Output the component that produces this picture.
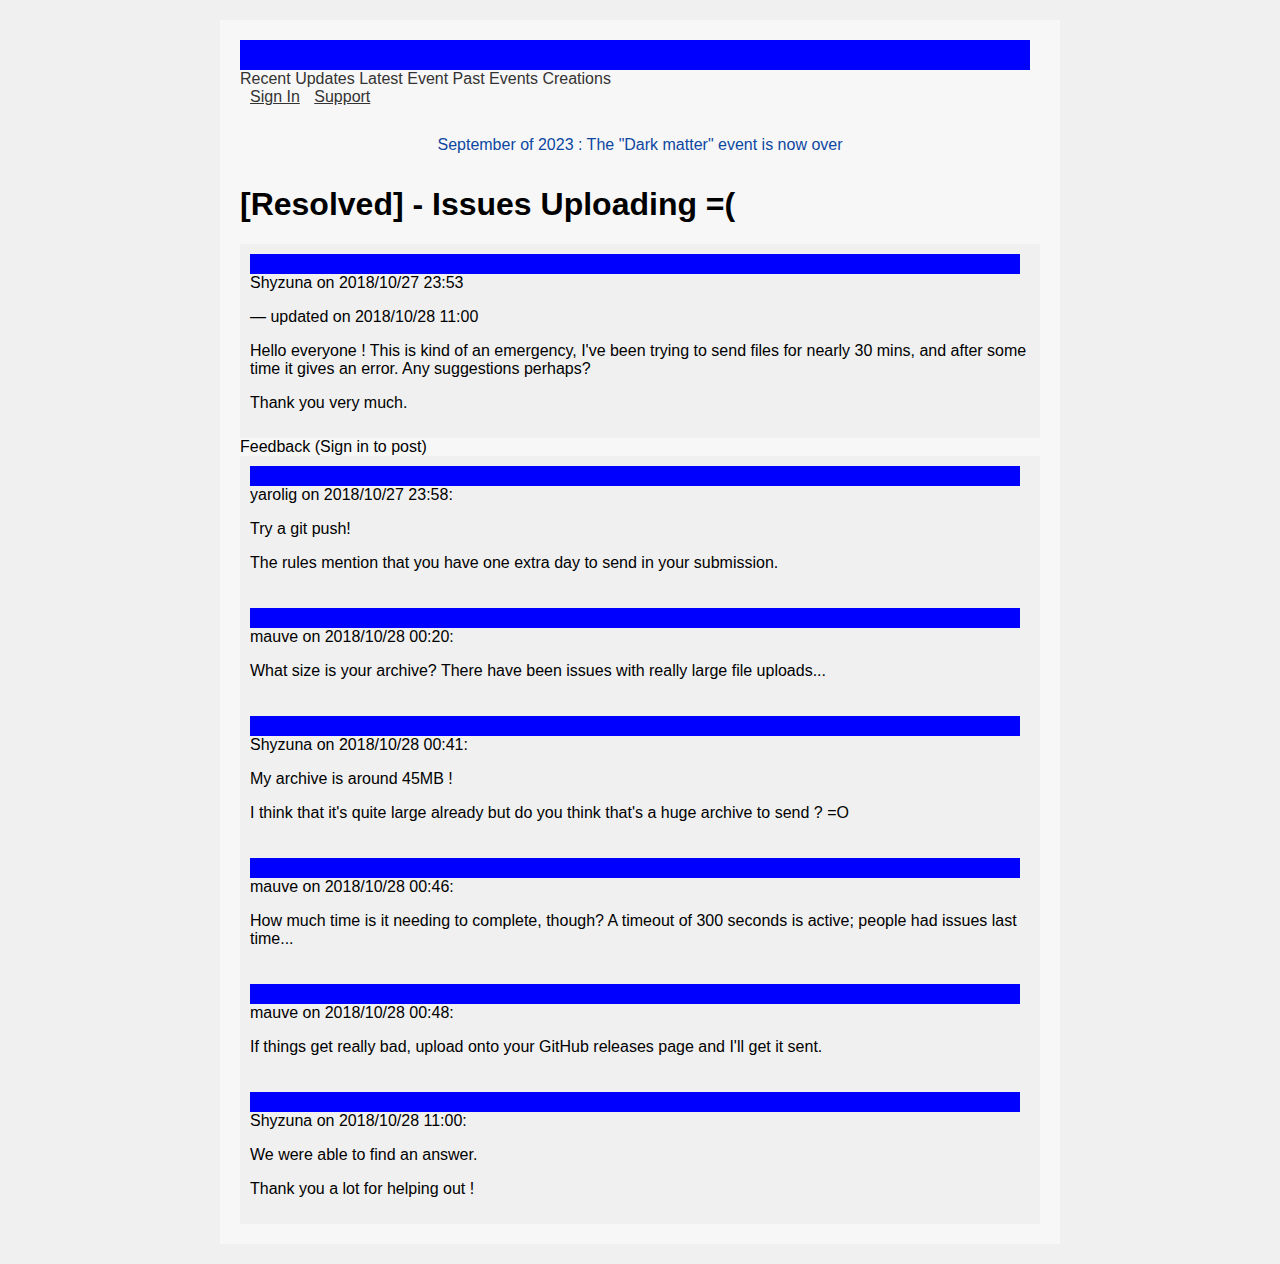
const comments: { author: string; date: string; paras: string[] }[] = [
  {
    author: "yarolig",
    date: "2018/10/27 23:58",
    paras: [
      "Try a git push!",
      "The rules mention that you have one extra day to send in your submission.",
    ],
  },
  {
    author: "mauve",
    date: "2018/10/28 00:20",
    paras: ["What size is your archive? There have been issues with really large file uploads..."],
  },
  {
    author: "Shyzuna",
    date: "2018/10/28 00:41",
    paras: [
      "My archive is around 45MB !",
      "I think that it's quite large already but do you think that's a huge archive to send ? =O",
    ],
  },
  {
    author: "mauve",
    date: "2018/10/28 00:46",
    paras: [
      "How much time is it needing to complete, though? A timeout of 300 seconds is active; people had issues last time...",
    ],
  },
  {
    author: "mauve",
    date: "2018/10/28 00:48",
    paras: ["If things get really bad, upload onto your GitHub releases page and I'll get it sent."],
  },
  {
    author: "Shyzuna",
    date: "2018/10/28 11:00",
    paras: ["We were able to find an answer.", "Thank you a lot for helping out !"],
  },
];

function Para({ children }: { children: React.ReactNode }) {
  return <p className="my-[16px] leading-[18px]">{children}</p>;
}

export default function App() {
  return (
    <div className="min-h-screen bg-[#f0f0f0] py-[20px] text-[16px] leading-[normal] text-black [font-family:'Liberation_Sans',Arial,sans-serif]">
      <div className="mx-auto w-[840px] bg-[#f7f7f7] p-[20px]">
        {/* header */}
        <div className="h-[30px] w-[790px] bg-[#0000ff]" />
        <div className="text-[#333]">
          <a>Recent Updates</a> <a>Latest Event</a> <a>Past Events</a> <a>Creations</a>
        </div>
        <div className="text-[#333]">
          <a className="ml-[10px] underline">Sign In</a> <a className="ml-[10px] underline">Support</a>
        </div>

        <div className="mt-[29.5px] text-center text-[#0d47a1]">
          September of 2023 : The "Dark matter" event is now over
        </div>

        <h1 className="mt-[32px] mb-[21.7px] text-[32px] font-bold leading-[normal]">
          [Resolved] - Issues Uploading =(
        </h1>

        {/* original post */}
        <div className="bg-[#f0f0f0] p-[10px]">
          <div className="h-[20px] w-[770px] bg-[#0000ff]" />
          <div className="leading-[18px]">Shyzuna on 2018/10/27 23:53</div>
          <Para>— updated on 2018/10/28 11:00</Para>
          <Para>
            Hello everyone ! This is kind of an emergency, I've been trying to send files for nearly 30 mins, and
            after some time it gives an error. Any suggestions perhaps?
          </Para>
          <Para>Thank you very much.</Para>
        </div>

        <div>Feedback (Sign in to post)</div>

        {/* comments */}
        <div className="bg-[#f0f0f0] p-[10px]">
          {comments.map((c, i) => (
            <div key={i} className={i < comments.length - 1 ? "pb-[20px]" : ""}>
              <div className="h-[20px] w-[770px] bg-[#0000ff]" />
              <div className="leading-[18px]">
                {c.author} on {c.date}:
              </div>
              {c.paras.map((p, j) => (
                <Para key={j}>{p}</Para>
              ))}
            </div>
          ))}
        </div>
      </div>
    </div>
  );
}
